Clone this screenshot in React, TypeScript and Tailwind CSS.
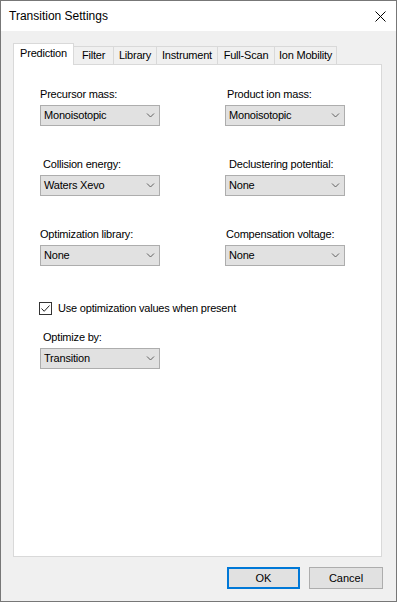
const font = "font-['Liberation_Sans',Arial,sans-serif]"

const tabs = [
  { label: 'Prediction', w: 'w-[61px]' },
  { label: 'Filter', w: 'w-[40px]' },
  { label: 'Library', w: 'w-[43px]' },
  { label: 'Instrument', w: 'w-[61px]' },
  { label: 'Full-Scan', w: 'w-[57px]' },
  { label: 'Ion Mobility', w: 'w-[62px]' },
]

function Chevron() {
  return (
    <svg width="9" height="5" viewBox="0 0 9 5" className="shrink-0">
      <path d="M1 0.5 L4.5 4 L8 0.5" fill="none" stroke="#606060" strokeWidth="1" />
    </svg>
  )
}

function Combo({ value }: { value: string }) {
  return (
    <div className="flex h-[21px] w-[120px] items-center justify-between border border-[#adadad] bg-[#e1e1e1] pl-[3px] pr-[4px] text-[11px] tracking-[-0.2px] text-black">
      <span>{value}</span>
      <Chevron />
    </div>
  )
}

function Field({ label, value, indent }: { label: string; value: string; indent: string }) {
  return (
    <div className="flex flex-col">
      <div className={`h-[13px] text-[11px] leading-[13px] tracking-[-0.2px] text-black ${indent}`}>{label}</div>
      <div className="mt-[4px]">
        <Combo value={value} />
      </div>
    </div>
  )
}

export default function App() {
  return (
    <div className={`flex h-[602px] w-[397px] flex-col border border-[#777] bg-[#f0f0f0] ${font}`}>
      {/* title bar */}
      <div className="flex h-[30px] shrink-0 items-center justify-between bg-white pl-[8px] pr-[10px]">
        <span className="text-[12px] text-black">Transition Settings</span>
        <svg width="11" height="11" viewBox="0 0 11 11">
          <path d="M0.5 0.5 L10.5 10.5 M10.5 0.5 L0.5 10.5" stroke="#000" strokeWidth="1" />
        </svg>
      </div>

      <div className="flex flex-1 flex-col pl-[12px] pr-[14px] pt-[12px]">
        {/* tabs */}
        <div className="relative z-10 flex h-[21px] items-end">
          {tabs.map((t, i) =>
            i === 0 ? (
              <div
                key={t.label}
                className={`-mb-px flex h-[22px] ${t.w} items-center justify-center border border-b-0 border-[#d9d9d9] bg-white pb-[2px] text-[11px] tracking-[-0.2px] text-black`}
              >
                {t.label}
              </div>
            ) : (
              <div
                key={t.label}
                className={`flex h-[18px] ${t.w} items-center justify-center border border-b-0 border-l-0 border-[#d9d9d9] bg-[#f0f0f0] text-[11px] tracking-[-0.2px] text-black`}
              >
                {t.label}
              </div>
            ),
          )}
        </div>

        {/* panel */}
        <div className="flex h-[493px] flex-col border border-[#d9d9d9] bg-white pl-[26px] pt-[23px]">
          <div className="grid grid-cols-[185px_1fr] gap-y-[32px]">
            <Field label="Precursor mass:" value="Monoisotopic" indent="ml-0" />
            <Field label="Product ion mass:" value="Monoisotopic" indent="ml-[2px]" />
            <Field label="Collision energy:" value="Waters Xevo" indent="ml-[3px]" />
            <Field label="Declustering potential:" value="None" indent="ml-[4px]" />
            <Field label="Optimization library:" value="None" indent="ml-0" />
            <Field label="Compensation voltage:" value="None" indent="ml-[1px]" />
          </div>

          <div className="mt-[34px] flex items-center">
            <div className="ml-[-1px] flex h-[13px] w-[13px] items-center justify-center border border-[#333] bg-white">
              <svg width="11" height="11" viewBox="0 0 11 11">
                <path d="M1.5 5.5 L4.2 8.3 L9.5 2.5" fill="none" stroke="#222" strokeWidth="1" />
              </svg>
            </div>
            <span className="ml-[6px] text-[11px] tracking-[-0.2px] text-black">Use optimization values when present</span>
          </div>

          <div className="mt-[14px]">
            <Field label="Optimize by:" value="Transition" indent="ml-[3px]" />
          </div>
        </div>

        {/* buttons */}
        <div className="mr-[-1px] mt-[10px] flex justify-end gap-[9px]">
          <div className="flex h-[22px] w-[73px] items-center justify-center border-2 border-[#0078d7] bg-[#e1e1e1] text-[11px] text-black">
            OK
          </div>
          <div className="flex h-[22px] w-[74px] items-center justify-center border border-[#adadad] bg-[#e1e1e1] text-[11px] text-black">
            Cancel
          </div>
        </div>
      </div>
    </div>
  )
}
